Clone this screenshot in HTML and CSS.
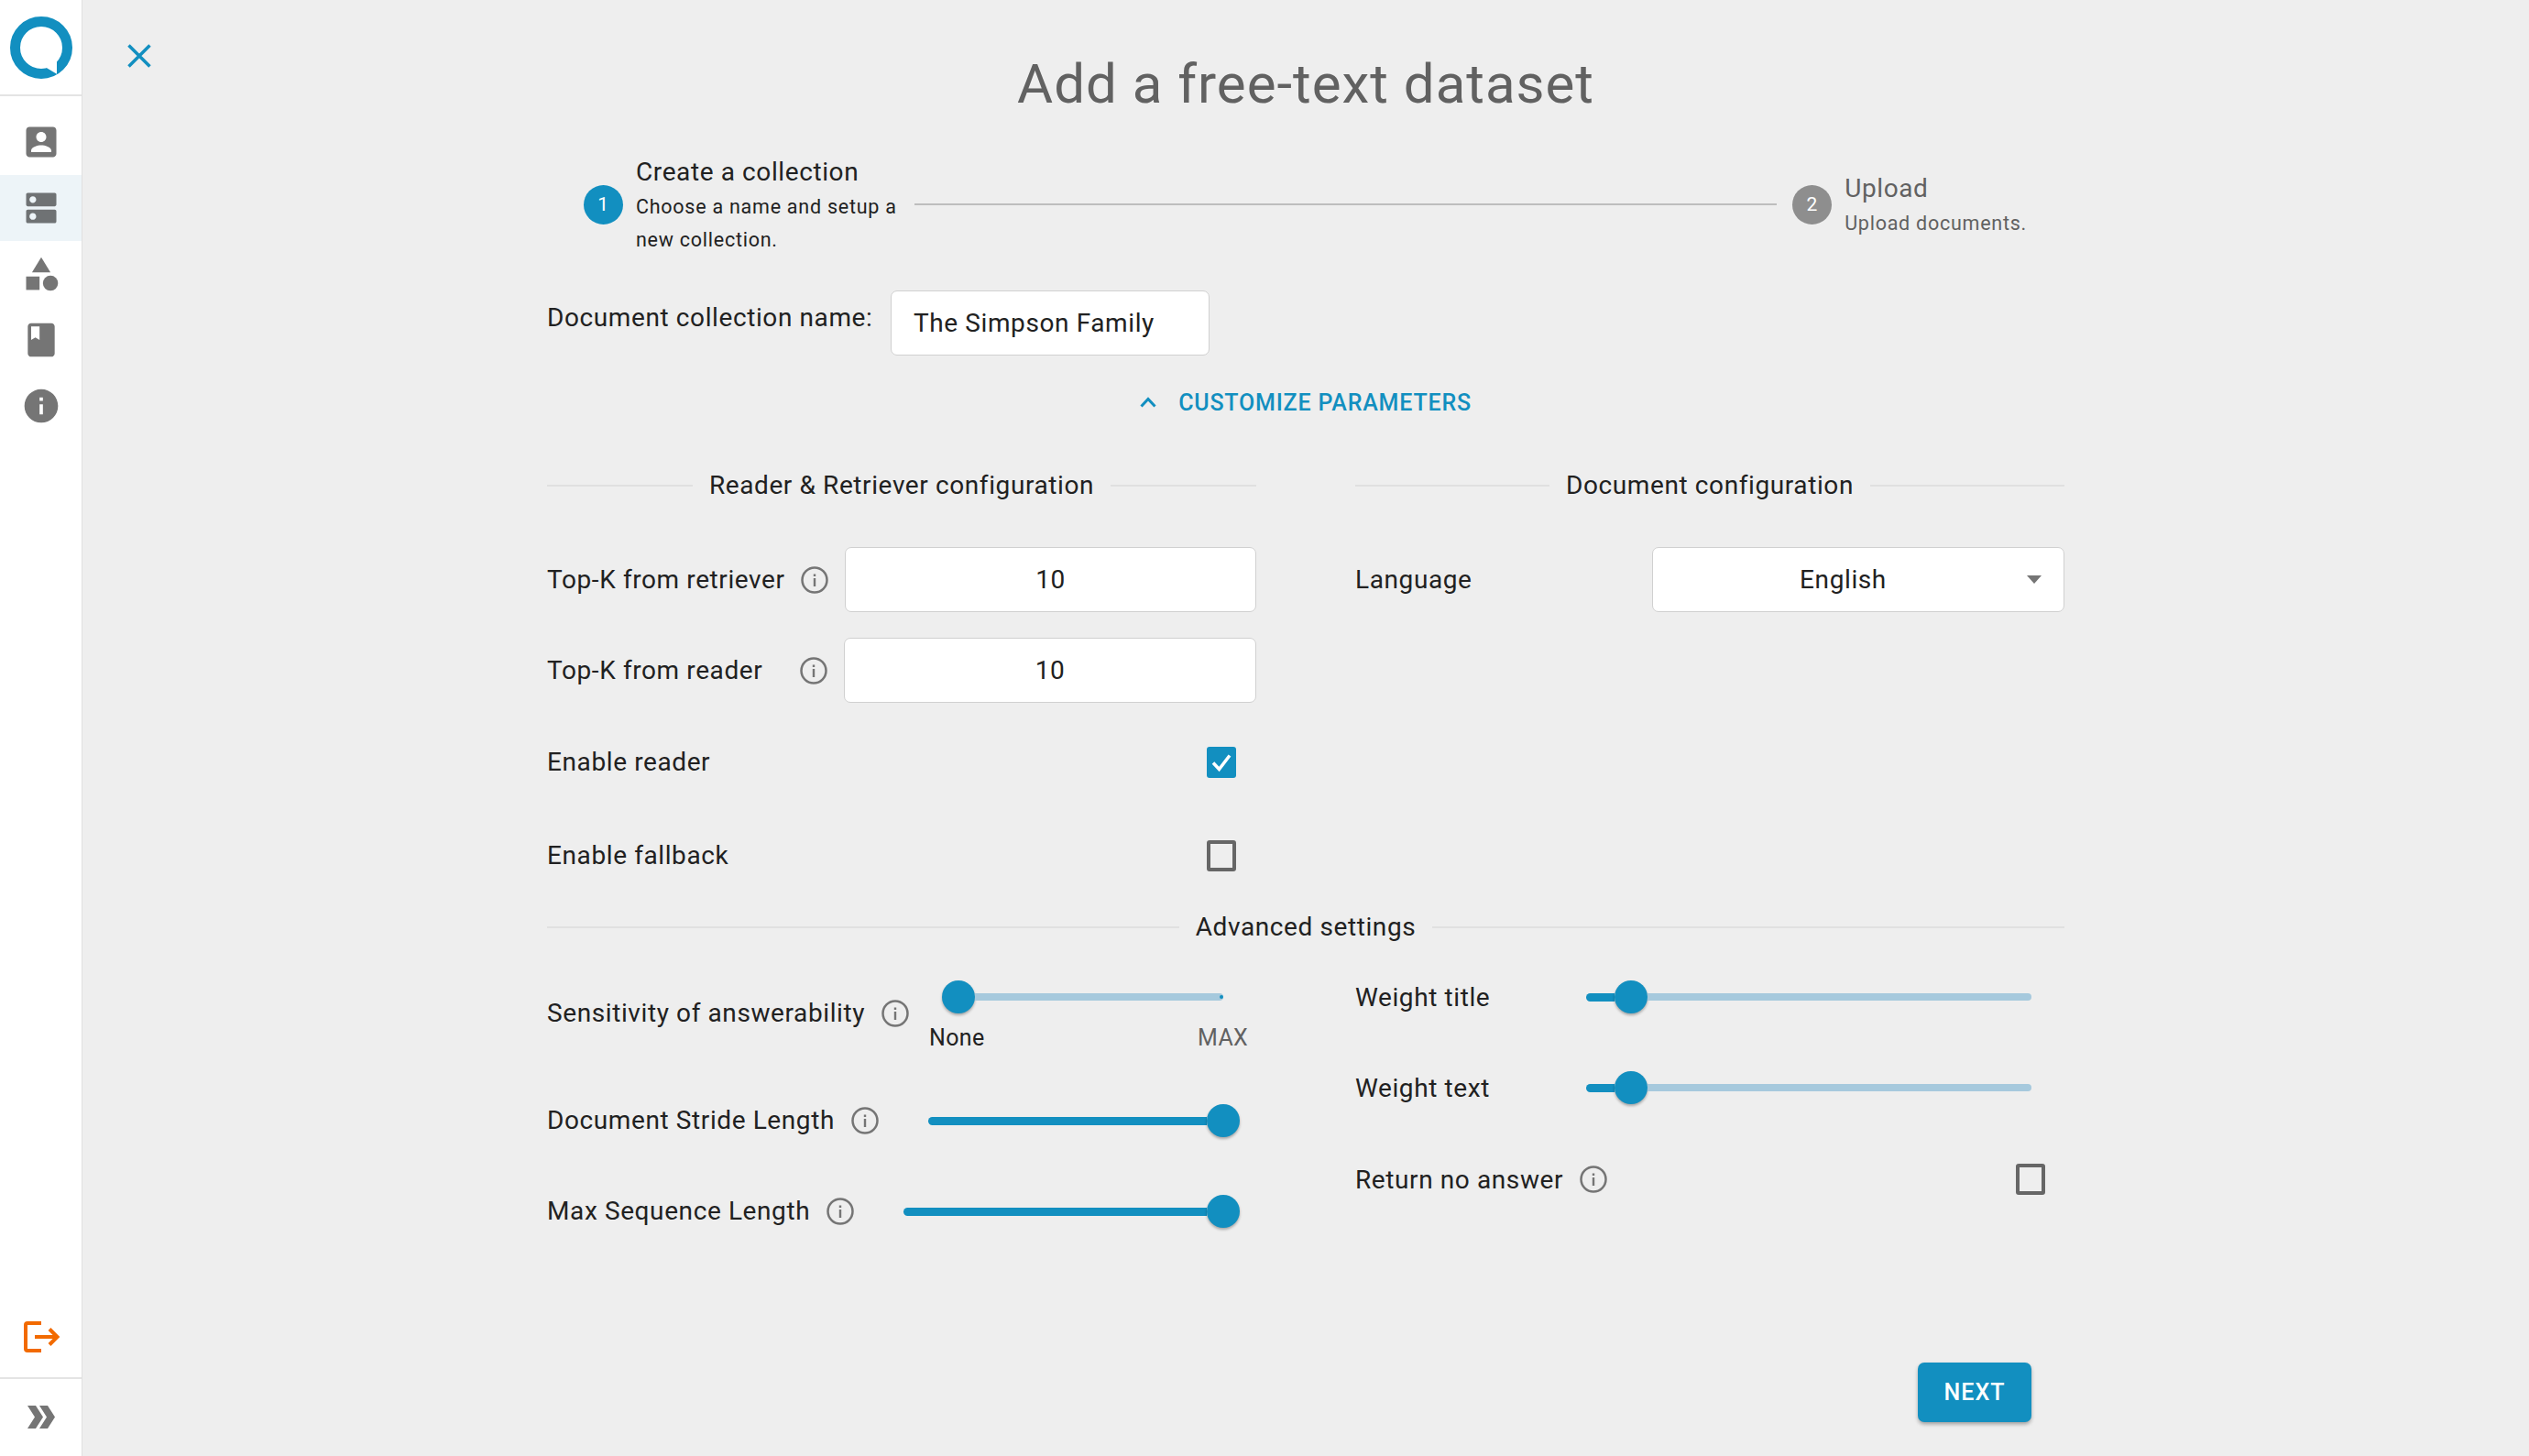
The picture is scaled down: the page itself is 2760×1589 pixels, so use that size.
FILE: index.html
```html
<!DOCTYPE html>
<html lang="en">
<head>
    <meta charset="UTF-8">
    <title>Add a free-text dataset</title>
    <link rel="stylesheet" href="styles.css">
</head>
<body>

    <aside class="sidebar">
        <div class="logo">
            <svg width="68" height="68" viewBox="0 0 68 68">
                <circle cx="34" cy="34" r="28.5" fill="#fff" stroke="#128fc0" stroke-width="11"/>
                <polygon points="39.7,56 51,62.7 51,48.7 45,50" fill="#fff"/>
            </svg>
        </div>
        <nav class="nav">
            <a class="nav-item"><svg class="nav-icon" viewBox="0 0 24 24"><path d="M3 5v14c0 1.1.89 2 2 2h14c1.1 0 2-.9 2-2V5c0-1.1-.9-2-2-2H5c-1.11 0-2 .9-2 2zm12 4c0 1.66-1.34 3-3 3s-3-1.34-3-3 1.34-3 3-3 3 1.34 3 3zm-9 8c0-2 4-3.1 6-3.1s6 1.1 6 3.1v1H6v-1z"/></svg></a>
            <a class="nav-item active"><svg class="nav-icon" viewBox="0 0 24 24"><path d="M20 13H4c-.55 0-1 .45-1 1v6c0 .55.45 1 1 1h16c.55 0 1-.45 1-1v-6c0-.55-.45-1-1-1zM7 19c-1.1 0-2-.9-2-2s.9-2 2-2 2 .9 2 2-.9 2-2 2zM20 3H4c-.55 0-1 .45-1 1v6c0 .55.45 1 1 1h16c.55 0 1-.45 1-1V4c0-.55-.45-1-1-1zM7 9c-1.1 0-2-.9-2-2s.9-2 2-2 2 .9 2 2-.9 2-2 2z"/></svg></a>
            <a class="nav-item"><svg class="nav-icon" viewBox="0 0 24 24"><path d="M12 2l-5.5 9h11z"/><circle cx="17.5" cy="17.5" r="4.5"/><path d="M3 13.5h8v8H3z"/></svg></a>
            <a class="nav-item"><svg class="nav-icon" viewBox="0 0 24 24"><path d="M18 2H6c-1.1 0-2 .9-2 2v16c0 1.1.9 2 2 2h12c1.1 0 2-.9 2-2V4c0-1.1-.9-2-2-2zM6 4h5v8l-2.5-1.5L6 12V4z"/></svg></a>
            <a class="nav-item"><svg class="nav-icon" viewBox="0 0 24 24"><path d="M12 2C6.48 2 2 6.48 2 12s4.48 10 10 10 10-4.48 10-10S17.52 2 12 2zm1 15h-2v-6h2v6zm0-8h-2V7h2v2z"/></svg></a>
        </nav>
        <a class="nav-item logout">
            <svg width="44" height="44" viewBox="0 0 44 44" fill="none" stroke="#f26a00" stroke-width="4">
                <path d="M22 7H7a2 2 0 0 0-2 2v26a2 2 0 0 0 2 2h15"/>
                <path d="M15 22h24M31 13.500l8.500 8.500-8.500 8.500"/>
            </svg>
        </a>
        <div class="collapse">
            <svg width="30" height="25" viewBox="0 0 30 25" fill="#757575">
                <polygon points="0,0 9,0 17,12.500 9,25 0,25 8,12.500"/>
                <polygon points="13,0 22,0 30,12.500 22,25 13,25 21,12.500"/>
            </svg>
        </div>
    </aside>

    <main class="main">
        <header class="page-head">
            <a class="close">
                <svg width="26" height="26" viewBox="0 0 26 26" fill="none" stroke="#128fc0" stroke-width="3.500"><path d="M1.500 1.500l23 23M24.500 1.500l-23 23"/></svg>
            </a>
            <h1>Add a free-text dataset</h1>
        </header>

        <div class="content">
            <div class="stepper">
                <div class="step">
                    <span class="step-num">1</span>
                    <div class="step-text">
                        <div class="step-title">Create a collection</div>
                        <div class="step-sub">Choose a name and setup a<br>new collection.</div>
                    </div>
                </div>
                <div class="step-line"></div>
                <div class="step todo">
                    <span class="step-num">2</span>
                    <div class="step-text">
                        <div class="step-title">Upload</div>
                        <div class="step-sub">Upload documents.</div>
                    </div>
                </div>
            </div>

            <div class="name-row">
                <label class="name-label" for="name">Document collection name:</label>
                <input class="name-input" type="text" id="name" value="The Simpson Family">
            </div>

            <button class="customize" type="button">
                <svg width="18" height="12" viewBox="0 0 18 12" fill="none" stroke="#128fc0" stroke-width="3"><path d="M1.500 10.500L9 2.500l7.500 8"/></svg>
                Customize parameters
            </button>

            <div class="columns config">
                <section>
                    <div class="divider"><span>Reader &amp; Retriever configuration</span></div>
                    <div class="row field first">
                        <span class="label">Top-K from retriever</span>
                        <svg class="info" viewBox="0 0 30 30"><use href="#info-outline"/></svg>
                        <input class="num" type="text" value="10">
                    </div>
                    <div class="row field second">
                        <span class="label">Top-K from reader</span>
                        <svg class="info" viewBox="0 0 30 30"><use href="#info-outline"/></svg>
                        <input class="num wide" type="text" value="10">
                    </div>
                    <div class="row check enable-reader">
                        <span class="label">Enable reader</span>
                        <span class="box checked">
                            <svg width="32" height="34" viewBox="0 0 32 34" fill="none" stroke="#fff" stroke-width="3.500"><path d="M7 17.500l6.500 7L25 9.500"/></svg>
                        </span>
                    </div>
                    <div class="row check enable-fallback">
                        <span class="label">Enable fallback</span>
                        <span class="box"></span>
                    </div>
                </section>
                <section>
                    <div class="divider"><span>Document configuration</span></div>
                    <div class="row field first">
                        <span class="label">Language</span>
                        <div class="select"><span>English</span><i class="caret"></i></div>
                    </div>
                </section>
            </div>

            <div class="divider advanced"><span>Advanced settings</span></div>

            <div class="columns">
                <section>
                    <div class="row sens">
                        <span class="label-auto">Sensitivity of answerability</span>
                        <svg class="info" viewBox="0 0 30 30"><use href="#info-outline"/></svg>
                        <div class="sens-slider">
                            <div class="slider thin">
                                <span class="knob"></span><span class="rest dotted"></span>
                            </div>
                            <div class="range"><span>None</span><span class="max">MAX</span></div>
                        </div>
                    </div>
                    <div class="row stride">
                        <span class="label-auto">Document Stride Length</span>
                        <svg class="info" viewBox="0 0 30 30"><use href="#info-outline"/></svg>
                        <div class="slider full">
                            <span class="fill"></span><span class="knob"></span>
                        </div>
                    </div>
                    <div class="row maxseq">
                        <span class="label-auto">Max Sequence Length</span>
                        <svg class="info" viewBox="0 0 30 30"><use href="#info-outline"/></svg>
                        <div class="slider full">
                            <span class="fill"></span><span class="knob"></span>
                        </div>
                    </div>
                </section>
                <section>
                    <div class="row weight w-title">
                        <span class="weight-label">Weight title</span>
                        <div class="slider">
                            <span class="fill" style="width: 31px"></span><span class="knob"></span><span class="rest"></span>
                        </div>
                    </div>
                    <div class="row weight w-text">
                        <span class="weight-label">Weight text</span>
                        <div class="slider">
                            <span class="fill" style="width: 31px"></span><span class="knob"></span><span class="rest"></span>
                        </div>
                    </div>
                    <div class="row no-answer">
                        <span class="label-auto">Return no answer</span>
                        <svg class="info" viewBox="0 0 30 30"><use href="#info-outline"/></svg>
                        <span class="box"></span>
                    </div>
                </section>
            </div>

            <div class="actions">
                <button class="next" type="button">Next</button>
            </div>
        </div>
    </main>

    <svg class="defs" width="0" height="0">
        <symbol id="info-outline" viewBox="0 0 30 30">
            <circle cx="15" cy="15" r="13.500" fill="none" stroke="#757575" stroke-width="2.500"/>
            <rect x="13.800" y="13" width="2.400" height="9" fill="#757575"/>
            <rect x="13.800" y="8.500" width="2.400" height="2.500" fill="#757575"/>
        </symbol>
    </svg>

</body>
</html>
```

FILE: styles.css
```css
* {
    box-sizing: border-box;
}
html, body {
    height: 100%;
}
body {
    margin: 0;
    height: 1589px;
    overflow: hidden;
    display: flex;
    font-family: Roboto, "Liberation Sans", sans-serif;
    font-size: 28px;
    letter-spacing: .6px;
    color: #212121;
    background: #eeeeee;
}
.defs {
    position: absolute;
}

/* sidebar */
.sidebar {
    width: 90px;
    flex: none;
    display: flex;
    flex-direction: column;
    background: #fff;
    border-right: 1px solid #e0e0e0;
}
.logo {
    height: 105px;
    flex: none;
    padding: 18px 0 0 11px;
    border-bottom: 2px solid #e4e4e4;
}
.logo svg {
    display: block;
}
.nav {
    padding-top: 14px;
    flex: 1;
}
.nav-item {
    height: 72px;
    display: flex;
    align-items: center;
    justify-content: center;
}
.nav-item.active {
    background: #edf4f8;
}
.nav-icon {
    width: 44px;
    height: 44px;
    fill: #757575;
}
.nav-item.active .nav-icon {
    fill: #6f7274;
}
.logout {
    margin-bottom: 8px;
}
.collapse {
    height: 86px;
    flex: none;
    border-top: 2px solid #e4e4e4;
    padding: 29px 0 0 30px;
}
.collapse svg {
    display: block;
}

/* main */
.main {
    flex: 1;
    min-width: 0;
}
.page-head {
    height: 167px;
    display: grid;
    grid-template-columns: 1fr auto 1fr;
    align-items: start;
}
.close {
    padding: 48px 0 0 49px;
}
.close svg {
    display: block;
}
h1 {
    margin: 0;
    padding-top: 52px;
    font-size: 60px;
    font-weight: 400;
    line-height: 80px;
    letter-spacing: 1px;
    color: #616161;
}
.content {
    width: 1656px;
    margin: 0 auto;
}

/* stepper */
.stepper {
    height: 112px;
    margin: 0 41px 0 40px;
    display: flex;
    align-items: center;
}
.step {
    display: flex;
    align-items: center;
    gap: 14px;
}
.step-num {
    width: 43px;
    height: 43px;
    flex: none;
    border-radius: 50%;
    background: #128fc0;
    color: #fff;
    font-size: 21px;
    line-height: 43px;
    text-align: center;
}
.step-text {
    padding-top: 2px;
}
.step-title {
    line-height: 40px;
}
.step-sub {
    font-size: 21.500px;
    line-height: 36px;
    letter-spacing: .75px;
    color: #212121;
}
.step-line {
    flex: 1;
    height: 2px;
    margin: 0 17px 0 19px;
    background: #bdbdbd;
}
.todo .step-num {
    background: #8e8e8e;
}
.todo .step-title,
.todo .step-sub {
    color: #616161;
}

/* name */
.name-row {
    display: flex;
    margin-top: 38px;
    height: 71px;
}
.name-label {
    width: 375px;
    line-height: 59px;
}
.name-input {
    width: 348px;
    height: 71px;
    padding: 0 24px;
    border: 1px solid #d0d0d0;
    border-radius: 7px;
    background: #fff;
    font: inherit;
    letter-spacing: inherit;
    color: #212121;
}
.customize {
    display: flex;
    align-items: center;
    justify-content: center;
    gap: 24px;
    width: 100%;
    height: 40px;
    margin-top: 31px;
    padding: 0;
    border: none;
    background: none;
    font-family: inherit;
    font-size: 25px;
    font-weight: 500;
    letter-spacing: .8px;
    text-transform: uppercase;
    color: #128fc0;
}

/* columns */
.columns {
    display: grid;
    grid-template-columns: 774px 774px;
    column-gap: 108px;
}
.config {
    margin-top: 51px;
}
.divider {
    display: flex;
    align-items: center;
    gap: 18px;
    height: 40px;
    white-space: nowrap;
}
.divider span {
    padding-bottom: 2px;
}
.divider::before,
.divider::after {
    content: "";
    flex: 1;
    height: 2px;
    background: #e0e0e0;
}
.divider.advanced {
    margin-top: 29px;
}
.row {
    display: flex;
    align-items: center;
}
.label {
    flex: 1;
    min-width: 0;
    white-space: nowrap;
}
.info {
    width: 30px;
    height: 30px;
    flex: none;
}
.field {
    height: 71px;
}
.field .info {
    margin: 0 18px;
}
.field.first {
    margin-top: 47px;
}
.field.second {
    margin-top: 28px;
}
.num {
    width: 449px;
    height: 71px;
    flex: none;
    border: 1px solid #d0d0d0;
    border-radius: 7px;
    background: #fff;
    font: inherit;
    letter-spacing: inherit;
    text-align: center;
    color: #212121;
}
.num.wide {
    width: 450px;
}
.select {
    width: 450px;
    height: 71px;
    padding: 0 24px 0 0;
    display: flex;
    align-items: center;
    border: 1px solid #d0d0d0;
    border-radius: 7px;
    background: #fff;
}
.select span {
    flex: 1;
    text-align: center;
}
.caret {
    width: 0;
    height: 0;
    margin-left: -7px;
    border-left: 8.500px solid transparent;
    border-right: 8.500px solid transparent;
    border-top: 9px solid #757575;
}
.check {
    height: 58px;
    padding-right: 22px;
}
.check .label {
    padding-bottom: 2px;
}
.enable-reader {
    margin-top: 36px;
}
.enable-fallback {
    margin-top: 44px;
}
.box {
    width: 32px;
    height: 34px;
    flex: none;
    border: 4px solid #666;
    border-radius: 3px;
}
.box.checked {
    border: none;
    background: #128fc0;
}
.box svg {
    display: block;
}

/* sliders */
.slider {
    display: flex;
    align-items: center;
    height: 36px;
    flex: 1;
}
.fill {
    height: 9px;
    flex: none;
    border-radius: 5px 0 0 5px;
    background: #128fc0;
}
.rest {
    flex: 1;
    height: 8px;
    border-radius: 0 4px 4px 0;
    background: #a6c9dd;
}
.knob {
    width: 36px;
    height: 36px;
    flex: none;
    border-radius: 50%;
    background: #128fc0;
    box-shadow: 0 2px 3px rgba(0, 0, 0, .3);
}
.slider.full .fill {
    flex: 1;
}
.label-auto {
    flex: none;
    white-space: nowrap;
}
.sens .label-auto,
.stride .label-auto,
.maxseq .label-auto {
    padding-bottom: 2px;
}
.sens {
    height: 72px;
    margin-top: 38px;
    padding-right: 9px;
}
.sens .info {
    margin: 0 24px 0 18px;
}
.sens-slider {
    flex: 1;
    align-self: flex-start;
}
.sens-slider .slider {
    margin: 0 27px 9px 12px;
    flex: none;
}
.dotted {
    position: relative;
}
.dotted::after {
    content: "";
    position: absolute;
    right: 0;
    top: 2px;
    width: 4px;
    height: 4px;
    border-radius: 50%;
    background: #128fc0;
}
.range {
    display: flex;
    justify-content: space-between;
    margin-left: -2px;
    font-size: 25px;
    line-height: 36px;
    letter-spacing: .3px;
}
.max {
    color: #616161;
}
.stride,
.maxseq {
    height: 60px;
    padding-right: 18px;
}
.stride .info,
.maxseq .info {
    margin: 0 54px 0 18px;
}
.stride {
    margin-top: 51px;
}
.maxseq {
    margin-top: 39px;
}
.weight {
    height: 60px;
    padding-right: 36px;
}
.weight-label {
    width: 252px;
    flex: none;
}
.w-title {
    margin-top: 26px;
}
.w-text {
    margin-top: 39px;
}
.no-answer {
    height: 60px;
    margin-top: 40px;
    padding: 0 21px 0 0;
}
.no-answer .info {
    margin-left: 18px;
}
.no-answer .box {
    margin-left: auto;
}

/* footer */
.actions {
    display: flex;
    justify-content: flex-end;
    margin-top: 135px;
    padding-right: 36px;
}
.next {
    width: 124px;
    height: 65px;
    border: none;
    border-radius: 7px;
    background: #128fc0;
    color: #fff;
    font-family: inherit;
    font-size: 25px;
    font-weight: 500;
    letter-spacing: 1px;
    text-transform: uppercase;
    box-shadow: 0 3px 4px -1px rgba(0, 0, 0, .25), 0 2px 5px rgba(0, 0, 0, .14);
}
```
